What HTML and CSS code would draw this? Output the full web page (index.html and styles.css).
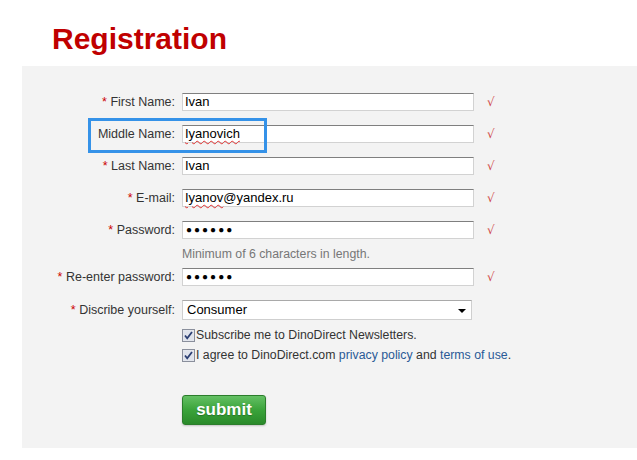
FILE: index.html
```html
<!DOCTYPE html>
<html>
<head>
<meta charset="utf-8">
<link rel="stylesheet" href="styles.css">
</head>
<body>
<h1 class="title">Registration</h1>
<div class="panel">
  <form class="form">
    <div class="row r1">
      <label class="label"><span class="req">*</span> First Name:</label>
      <div class="field">Ivan</div>
      <span class="ok">√</span>
    </div>
    <div class="row">
      <label class="label">Middle Name:</label>
      <div class="field"><span class="typo">Iyanovich</span></div>
      <span class="ok">√</span>
    </div>
    <div class="row">
      <label class="label"><span class="req">*</span> Last Name:</label>
      <div class="field">Ivan</div>
      <span class="ok">√</span>
    </div>
    <div class="row">
      <label class="label"><span class="req">*</span> E-mail:</label>
      <div class="field"><span class="typo">Iyanov</span>@yandex.ru</div>
      <span class="ok">√</span>
    </div>
    <div class="row">
      <label class="label"><span class="req">*</span> Password:</label>
      <div class="field dots">●●●●●●</div>
      <span class="ok">√</span>
    </div>
    <div class="row hint-row">
      <span></span>
      <div class="hint">Minimum of 6 characters in length.</div>
    </div>
    <div class="row r-re">
      <label class="label"><span class="req">*</span> Re-enter password:</label>
      <div class="field dots">●●●●●●</div>
      <span class="ok">√</span>
    </div>
    <div class="row r-sel">
      <label class="label"><span class="req">*</span> Discribe yourself:</label>
      <div class="select">Consumer<span class="arrow"></span></div>
    </div>
    <div class="row r-cb1">
      <span></span>
      <div class="check-line"><svg class="cb" width="13" height="13" viewBox="0 0 13 13"><rect x="0.5" y="0.5" width="12" height="12" fill="#e6e8ee" stroke="#8a8f9c"/><rect x="1.5" y="1.5" width="10" height="10" fill="#dfe3ec"/><path d="M3 6.5 L5.2 9.2 L10 3" fill="none" stroke="#2c3f73" stroke-width="1.8"/></svg>Subscribe me to DinoDirect Newsletters.</div>
    </div>
    <div class="row r-cb2">
      <span></span>
      <div class="check-line"><svg class="cb" width="13" height="13" viewBox="0 0 13 13"><rect x="0.5" y="0.5" width="12" height="12" fill="#e6e8ee" stroke="#8a8f9c"/><rect x="1.5" y="1.5" width="10" height="10" fill="#dfe3ec"/><path d="M3 6.5 L5.2 9.2 L10 3" fill="none" stroke="#2c3f73" stroke-width="1.8"/></svg><span>I agree to DinoDirect.com <a class="link" href="#">privacy policy</a> and <a class="link" href="#">terms of use</a>.</span></div>
    </div>
    <div class="row r-sub">
      <span></span>
      <div><button type="button" class="submit">submit</button></div>
    </div>
  </form>
  <div class="highlight"></div>
</div>
</body>
</html>
```
FILE: styles.css
```css
html, body {
  margin: 0;
  padding: 0;
  background: #ffffff;
  font-family: "Liberation Sans", Arial, sans-serif;
}
.title {
  margin: 0;
  padding: 21px 0 0 52px;
  height: 66px;
  box-sizing: border-box;
  font-size: 30px;
  line-height: 36px;
  font-weight: bold;
  color: #c00000;
}
.panel {
  position: relative;
  margin-left: 22px;
  height: 382px;
  background: #f3f3f3;
}
.form {
  display: flex;
  flex-direction: column;
  padding-top: 27px;
}
.row {
  display: grid;
  grid-template-columns: 153px 292px 30px;
  column-gap: 7px;
  align-items: center;
  height: 18px;
  margin-bottom: 14px;
}
.label {
  text-align: right;
  font-size: 12.5px;
  color: #333333;
  white-space: nowrap;
}
.req {
  color: #cc0000;
}
.field {
  box-sizing: border-box;
  height: 18px;
  background: #ffffff;
  border: 1px solid #d2d2d2;
  border-top-color: #7f7f7f;
  font-size: 13px;
  line-height: 16px;
  padding-left: 2px;
  color: #000000;
}
.typo {
  text-decoration: underline wavy #e03030;
  text-decoration-thickness: 1px;
  text-underline-offset: 2px;
}
.dots {
  font-size: 10px;
  letter-spacing: 2px;
  line-height: 16px;
  padding-left: 3px;
}
.ok {
  color: #d04848;
  font-size: 12px;
  margin-left: 6px;
  font-family: "DejaVu Serif", serif;
}
.hint-row {
  margin-top: -7px;
  margin-bottom: 7px;
  height: 15px;
}
.hint {
  font-size: 12.3px;
  color: #777777;
}
.r-re {
  margin-bottom: 14px;
}
.r-sel {
  height: 20px;
  margin-bottom: 8px;
}
.select {
  position: relative;
  box-sizing: border-box;
  width: 290px;
  height: 20px;
  background: #ffffff;
  border: 1px solid #cfcfcf;
  border-top-color: #a9a9a9;
  font-size: 13px;
  line-height: 18px;
  padding-left: 4px;
  color: #000000;
}
.arrow {
  position: absolute;
  right: 5px;
  top: 8px;
  border-left: 4px solid transparent;
  border-right: 4px solid transparent;
  border-top: 4px solid #000000;
}
.r-cb1, .r-cb2 {
  height: 14px;
  margin-bottom: 6px;
}
.check-line {
  display: flex;
  align-items: center;
  font-size: 12.3px;
  color: #333333;
  white-space: nowrap;
}
.cb {
  flex: none;
  margin-right: 1px;
}
.link {
  color: #2a5a96;
  text-decoration: none;
}
.r-sub {
  margin-top: 27px;
  height: 30px;
}
.submit {
  width: 84px;
  height: 30px;
  border: 1px solid #2b7d2b;
  border-radius: 3px;
  background: linear-gradient(#64c064, #3aa33a 50%, #2a8a2a);
  color: #ffffff;
  font-family: "Liberation Sans", Arial, sans-serif;
  font-size: 17px;
  font-weight: bold;
  padding: 0;
  text-shadow: 0 1px 1px rgba(0,0,0,0.25);
  box-shadow: 0 1px 2px rgba(0,0,0,0.2);
}
.highlight {
  position: absolute;
  left: 66px;
  top: 52px;
  width: 179px;
  height: 35px;
  box-sizing: border-box;
  border: 3px solid #3592e8;
}
```
